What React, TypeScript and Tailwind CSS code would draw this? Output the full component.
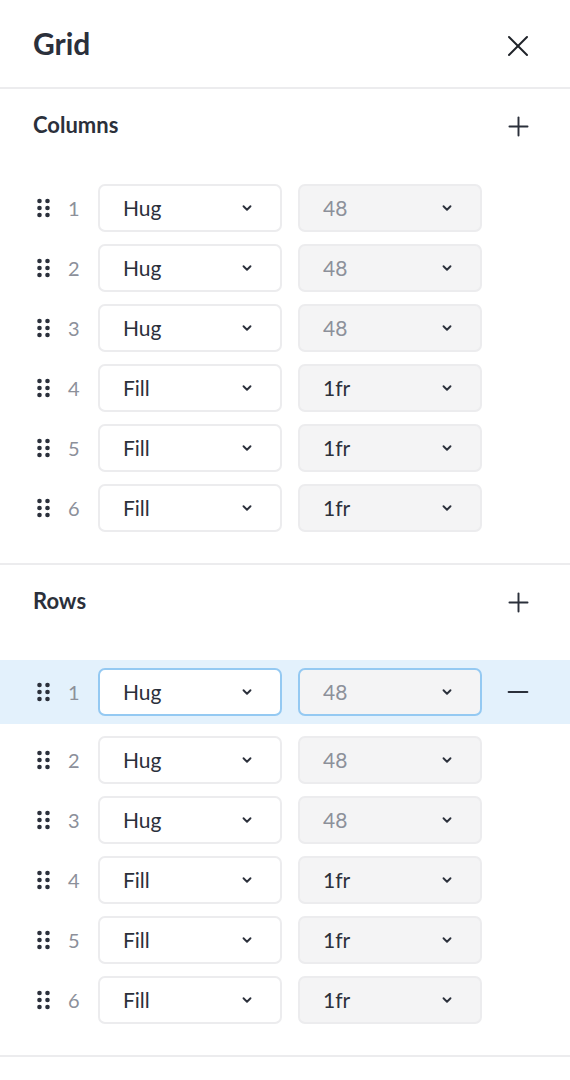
import { X, Plus, Minus, ChevronDown } from 'lucide-react';

type Track = { id: number; mode: string; size: string };

const tracks: Track[] = [
  { id: 1, mode: 'Hug', size: '48' },
  { id: 2, mode: 'Hug', size: '48' },
  { id: 3, mode: 'Hug', size: '48' },
  { id: 4, mode: 'Fill', size: '1fr' },
  { id: 5, mode: 'Fill', size: '1fr' },
  { id: 6, mode: 'Fill', size: '1fr' },
];

function Grip() {
  return (
    <svg width="13" height="20" viewBox="0 0 13 20" className="shrink-0 text-[#2b303b]">
      {[3, 10, 17].map((cy) => (
        <g key={cy}>
          <circle cx="2.5" cy={cy} r="2.3" fill="currentColor" />
          <circle cx="10.5" cy={cy} r="2.3" fill="currentColor" />
        </g>
      ))}
    </svg>
  );
}

function Select({ value, muted, filled, active }: { value: string; muted?: boolean; filled?: boolean; active?: boolean }) {
  return (
    <div
      className={
        'flex h-12 w-[184px] items-center justify-between rounded-[7px] border-2 pl-[23px] pr-[26px] ' +
        (active ? 'border-[#94c9f2] ' : 'border-[#ececee] ') +
        (filled ? 'bg-[#f4f4f5]' : 'bg-white')
      }
    >
      <span className={'text-[21px] ' + (muted ? 'text-[#8c909a]' : 'text-[#2b303b]')}>{value}</span>
      <ChevronDown className="h-[14px] w-[14px] text-[#2b303b]" strokeWidth={3.2} />
    </div>
  );
}

function IconBox({ children }: { children: React.ReactNode }) {
  return <div className="flex h-9 w-9 shrink-0 items-center justify-center text-[#2b303b]">{children}</div>;
}

function TrackRow({ track, active }: { track: Track; active?: boolean }) {
  const muted = track.size === '48';
  return (
    <div className={'flex items-center pl-[37px] pr-[34px] ' + (active ? 'bg-[#e3f1fc] py-2' : '')}>
      <Grip />
      <span className="w-12 pl-[18px] text-[20px] text-[#8c909a]">{track.id}</span>
      <div className="flex gap-4">
        <Select value={track.mode} active={active} />
        <Select value={track.size} muted={muted} filled active={active} />
      </div>
      {active && (
        <div className="ml-auto">
          <IconBox>
            <Minus className="h-8 w-8" strokeWidth={1.6} />
          </IconBox>
        </div>
      )}
    </div>
  );
}

function Section({ title, activeRow }: { title: string; activeRow?: number }) {
  return (
    <section className="border-b-2 border-[#ececee] pt-[21px] pb-[31px]">
      <div className="flex h-7 items-center justify-between pl-[33px] pr-[34px]">
        <h2 className="text-[22px] font-bold text-[#2b303b]">{title}</h2>
        <div className="mt-1">
          <IconBox>
            <Plus className="h-[31px] w-[31px]" strokeWidth={1.5} />
          </IconBox>
        </div>
      </div>
      <div className="mt-[46px] flex flex-col gap-3">
        {tracks.map((t) => (
          <TrackRow key={t.id} track={t} active={t.id === activeRow} />
        ))}
      </div>
    </section>
  );
}

export default function App() {
  return (
    <div className="min-h-[1080px] w-[570px] bg-white font-['Lato',sans-serif]">
      <header className="flex h-[89px] items-center justify-between border-b-2 border-[#ececee] pl-[33px] pr-[34px]">
        <h1 className="text-[30px] font-bold text-[#2b303b]">Grid</h1>
        <div className="mt-1">
          <IconBox>
            <X className="h-9 w-9 text-[#1f2329]" strokeWidth={1.3} />
          </IconBox>
        </div>
      </header>
      <Section title="Columns" />
      <Section title="Rows" activeRow={1} />
    </div>
  );
}
